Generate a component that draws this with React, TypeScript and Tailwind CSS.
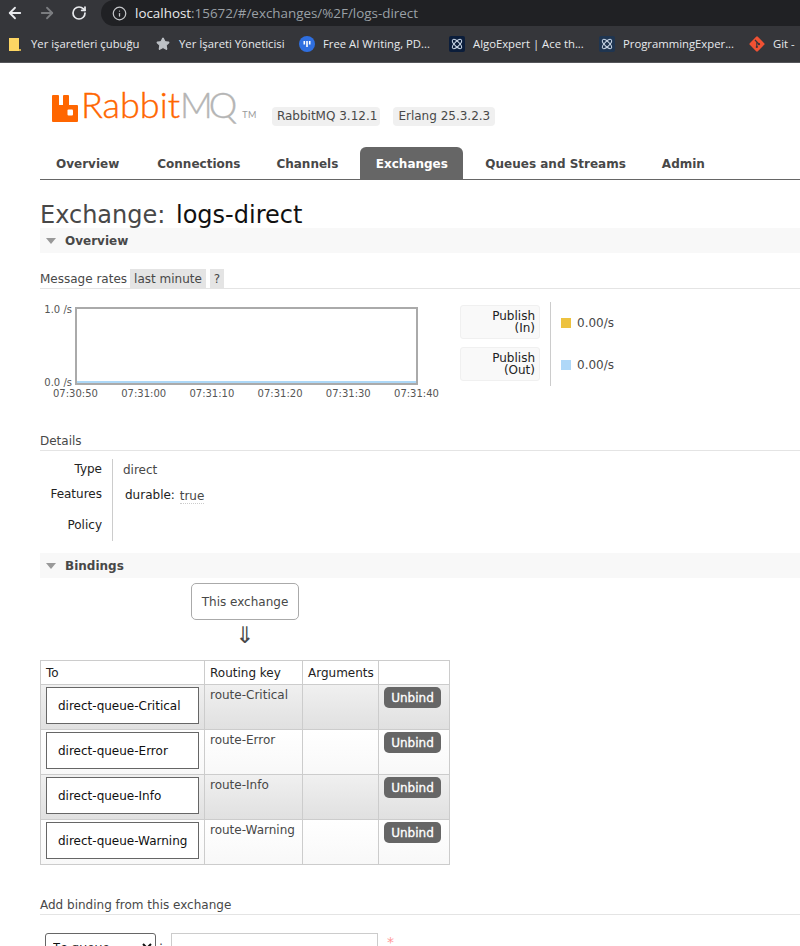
import React from 'react';
import { ArrowLeft, ArrowRight, RotateCw, Info, Star } from 'lucide-react';

const tabs = [
  { label: 'Overview', gap: 'mr-[6px]' },
  { label: 'Connections', gap: 'mr-[4px]' },
  { label: 'Channels', gap: 'mr-[6px]' },
  { label: 'Exchanges', gap: 'mr-[6px]' },
  { label: 'Queues and Streams', gap: 'mr-[4px]' },
  { label: 'Admin', gap: '' },
];
const times = ['07:30:50', '07:31:00', '07:31:10', '07:31:20', '07:31:30', '07:31:40'];
const bindings = [
  { queue: 'direct-queue-Critical', key: 'route-Critical' },
  { queue: 'direct-queue-Error', key: 'route-Error' },
  { queue: 'direct-queue-Info', key: 'route-Info' },
  { queue: 'direct-queue-Warning', key: 'route-Warning' },
];

function KnotIcon({ bg }: { bg: string }) {
  return (
    <svg width="16" height="16" viewBox="0 0 16 16" className="shrink-0">
      <rect width="16" height="16" rx="2" fill={bg} />
      <g fill="none" stroke="#c9d6e6" strokeWidth="1">
        <ellipse cx="8" cy="8" rx="6" ry="2.4" transform="rotate(45 8 8)" />
        <ellipse cx="8" cy="8" rx="6" ry="2.4" transform="rotate(-45 8 8)" />
      </g>
    </svg>
  );
}

function Bookmark({ icon, label, width }: { icon: React.ReactNode; label: string; width: string }) {
  return (
    <div className={`flex items-center gap-[8px] shrink-0 ${width}`}>
      {icon}
      <span className="text-[11.3px] text-[#e8eaed] whitespace-nowrap">{label}</span>
    </div>
  );
}

function BrowserChrome() {
  return (
    <div className="font-['Open_Sans',sans-serif]">
      <div className="h-[26px] bg-[#35363a] flex items-center pl-[6px] overflow-hidden">
        <ArrowLeft size={18} strokeWidth={2.4} className="text-[#e8eaed] shrink-0" />
        <ArrowRight size={18} strokeWidth={2.4} className="text-[#7b7d80] ml-[14px] shrink-0" />
        <RotateCw size={16} strokeWidth={2.6} className="text-[#e8eaed] ml-[15px] shrink-0" />
        <div className="ml-[14px] flex-1 h-[26px] rounded-l-[13px] bg-[#202124] flex items-center pl-[11px]">
          <Info size={15} className="text-[#c4c6c9]" />
          <span className="ml-[8px] text-[13.4px] text-[#e8eaed]">localhost</span>
          <span className="text-[13.4px] text-[#9aa0a6]">:15672/#/exchanges/%2F/logs-direct</span>
        </div>
      </div>
      <div className="h-[37px] bg-[#35363a] border-b border-[#55565a] flex items-center pl-[9px] overflow-hidden">
        <Bookmark
          width="w-[147px]"
          label="Yer işaretleri çubuğu"
          icon={
            <svg width="12" height="15" viewBox="0 0 12 15" className="mr-[2px]">
              <path d="M0 1h10v13H0z" fill="#fdd663" />
              <path d="M10 12h2v2h-2z" fill="#c9a94e" />
            </svg>
          }
        />
        <Bookmark
          width="w-[143px]"
          label="Yer İşareti Yöneticisi"
          icon={<Star size={14} fill="#bdc1c6" className="text-[#bdc1c6] mr-[1px]" />}
        />
        <Bookmark
          width="w-[150px]"
          label="Free AI Writing, PD..."
          icon={
            <svg width="16" height="16" viewBox="0 0 16 16">
              <circle cx="8" cy="8" r="8" fill="#2f6fe0" />
              <path d="M4.5 5h1.6v3.5H4.5zM7.2 5h1.6v6H7.2zM9.9 5h1.6v3.5H9.9z" fill="#fff" />
            </svg>
          }
        />
        <Bookmark width="w-[150px]" label="AlgoExpert | Ace th..." icon={<KnotIcon bg="#0b1d3a" />} />
        <Bookmark width="w-[150px]" label="ProgrammingExper..." icon={<KnotIcon bg="#1f3550" />} />
        <Bookmark
          width="w-[60px]"
          label="Git -"
          icon={
            <svg width="16" height="16" viewBox="0 0 16 16">
              <rect x="2.3" y="2.3" width="11.4" height="11.4" rx="1.2" transform="rotate(45 8 8)" fill="#f05133" />
              <path d="M6 4l4 4.2M7.8 6v5" stroke="#35363a" strokeWidth="1.2" />
              <circle cx="7.8" cy="11" r="1.1" fill="#35363a" />
              <circle cx="10" cy="8.2" r="1.1" fill="#35363a" />
            </svg>
          }
        />
      </div>
    </div>
  );
}

function Logo() {
  return (
    <div className="flex items-end h-[34px] font-['Lato',sans-serif]">
      <svg width="26" height="27" viewBox="0 0 26 27" className="shrink-0 mb-[3px] mr-[3px]">
        <path
          d="M1 0h5a1 1 0 0 1 1 1v9h4V1a1 1 0 0 1 1-1h4a1 1 0 0 1 1 1v9h8a1 1 0 0 1 1 1v15a1 1 0 0 1-1 1H1a1 1 0 0 1-1-1V1a1 1 0 0 1 1-1z"
          fill="#ff6600"
        />
        <rect x="15.500" y="14.500" width="5.500" height="6" rx="1" fill="#fff" />
      </svg>
      <span className="text-[36px] leading-[36px] mb-[3px] text-[#ff6600] font-light [-webkit-text-stroke:0.4px_#ff6600]">Rabbit</span>
      <span className="text-[36px] leading-[36px] mb-[3px] text-[#b5b5b5] font-light tracking-[-4px] [-webkit-text-stroke:0.4px_#b5b5b5]">MQ</span>
      <span className="text-[9px] leading-[20px] text-[#999] ml-[9px] tracking-[0.5px]">TM</span>
    </div>
  );
}

function SectionHeader({ title }: { title: string }) {
  return (
    <div className="h-[25px] bg-[#f8f8f8] flex items-center pl-[6px]">
      <span className="w-0 h-0 border-l-[5.5px] border-r-[5.5px] border-t-[6px] border-l-transparent border-r-transparent border-t-[#999]" />
      <span className="ml-[9px] text-[12px] font-bold text-[#484848]">{title}</span>
    </div>
  );
}

function RateChart() {
  return (
    <div className="flex">
      <div className="w-[35px] h-[85px] -mt-[3px] flex flex-col justify-between text-[10px] leading-[12px] text-[#555] text-right pr-[3px]">
        <span>1.0 /s</span>
        <span>0.0 /s</span>
      </div>
      <div>
        <div className="w-[343px] h-[78px] border-2 border-[#aaa] flex flex-col justify-end">
          <div className="h-[2px] bg-[#add8f7]" />
        </div>
        <div className="w-[386px] -ml-[22px] flex justify-between text-[10px] leading-[12px] text-[#555] mt-[3px]">
          {times.map((t) => (
            <span key={t}>{t}</span>
          ))}
        </div>
      </div>
    </div>
  );
}

function Legend() {
  return (
    <div className="flex ml-[21px] -mt-[2px]">
      <div className="w-[80px] flex flex-col gap-[8px]">
        {['(In)', '(Out)'].map((dir) => (
          <div
            key={dir}
            className="h-[34px] bg-[#f9f9f9] border border-[#f0f0f0] rounded-[3px] text-right pr-[4px] text-[12px] leading-[12px] text-[#222] pt-[4px]"
          >
            Publish
            <br />
            {dir}
          </div>
        ))}
      </div>
      <div className="ml-[10px] border-l border-[#ccc] h-[84px] -mt-[3px] pl-[10px] flex flex-col">
        <div className="flex items-center gap-[6px] h-[34px] mt-[4px] text-[12px] text-[#484848]">
          <span className="w-[10px] h-[10px] bg-[#edc240]" />
          0.00/s
        </div>
        <div className="flex items-center gap-[6px] h-[34px] mt-[8px] text-[12px] text-[#484848]">
          <span className="w-[10px] h-[10px] bg-[#afd8f8]" />
          0.00/s
        </div>
      </div>
    </div>
  );
}

function Details() {
  return (
    <div className="flex mt-[8px] text-[12px] text-[#222]">
      <div className="w-[73px] border-r border-[#ccc] h-[82px] text-right pr-[10px] flex flex-col">
        <span className="mt-[2px] leading-[16px]">Type</span>
        <span className="mt-[9px] leading-[16px]">Features</span>
        <span className="mt-[15px] leading-[16px]">Policy</span>
      </div>
      <div className="flex flex-col">
        <span className="ml-[10px] mt-[3px] leading-[16px] text-[#484848]">direct</span>
        <span className="ml-[12px] mt-[9px] leading-[16px]">
          durable:{' '}
          <span className="text-[#484848] relative top-[1px] ml-[1px] border-b border-dotted border-[#ccc]">true</span>
        </span>
      </div>
    </div>
  );
}

function BindingsTable() {
  return (
    <table className="w-[410px] table-fixed border-collapse border border-[#ccc] text-[12px]">
      <thead>
        <tr className="h-[24px] text-left text-[#222]">
          <th className="w-[164px] font-normal border border-[#ccc] pl-[5px]">To</th>
          <th className="w-[98px] font-normal border border-[#ccc] pl-[5px]">Routing key</th>
          <th className="w-[76px] font-normal border border-[#ccc] pl-[5px]">Arguments</th>
          <th className="font-normal border border-[#ccc]" />
        </tr>
      </thead>
      <tbody>
        {bindings.map((b, i) => {
          const bg = i % 2 === 0 ? 'bg-gradient-to-b from-[#f0f0f0] to-[#e0e0e0]' : 'bg-gradient-to-b from-white to-[#f8f8f8]';
          return (
            <tr key={b.queue} className={`h-[45px] ${bg}`}>
              <td className="border border-[#ccc] pl-[5px] align-top pt-[2px]">
                <div className="w-[153px] h-[37px] bg-white border border-[#666] flex items-center pl-[11px] text-[#111]">
                  {b.queue}
                </div>
              </td>
              <td className="border border-[#ccc] pl-[5px] align-top pt-[1px] text-[#484848]">{b.key}</td>
              <td className="border border-[#ccc]" />
              <td className="border border-[#ccc] pl-[5px] align-top pt-[2px]">
                <div className="w-[57px] h-[21px] rounded-[5px] bg-[#666] text-white text-[12px] [-webkit-text-stroke:0.3px_white] flex items-center justify-center">
                  Unbind
                </div>
              </td>
            </tr>
          );
        })}
      </tbody>
    </table>
  );
}

export default function App() {
  return (
    <div className="w-[800px] h-[946px] overflow-hidden bg-white">
      <BrowserChrome />
      <div className="pl-[40px] font-['DejaVu_Sans',sans-serif]">
        <div className="flex items-end pl-[12px] mt-[28px]">
          <Logo />
          <span className="ml-[15px] mb-[-1px] h-[19px] pl-[5px] pr-[3px] rounded-[4px] bg-[#f0f0f0] text-[12px] leading-[19px] text-[#484848]">RabbitMQ 3.12.1</span>
          <span className="ml-[13px] mb-[-1px] h-[19px] px-[5px] rounded-[4px] bg-[#f0f0f0] text-[12px] leading-[19px] text-[#484848]">Erlang 25.3.2.3</span>
        </div>

        <div className="flex border-b border-[#666] mt-[22px] h-[33px] items-end text-[12px] font-bold text-[#484848]">
          {tabs.map((t) => (
            <div
              key={t.label}
              className={
                t.label === 'Exchanges'
                  ? `h-[32px] w-[103px] justify-center pt-[1px] rounded-t-[6px] bg-[#666] text-white flex items-center ${t.gap}`
                  : `h-[32px] px-[16px] pt-[1px] flex items-center ${t.gap}`
              }
            >
              {t.label}
            </div>
          ))}
        </div>

        <h1 className="mt-[21px] h-[27px] text-[24px] leading-[28px] text-[#484848]">
          Exchange: <span className="text-[#111] ml-[3px]">logs-direct</span>
        </h1>
        <SectionHeader title="Overview" />

        <div className="mt-[16px] h-[20px] flex items-center border-b border-[#e4e4e4] text-[12px] text-[#484848]">
          Message rates
          <span className="ml-[3px] h-[19px] px-[4px] bg-[#e4e4e4] leading-[21px]">last minute</span>
          <span className="ml-[4px] h-[19px] px-[4px] bg-[#e4e4e4] leading-[21px]">?</span>
        </div>

        <div className="flex mt-[18px]">
          <RateChart />
          <Legend />
        </div>

        <div className="mt-[31px] h-[20px] flex items-center border-b border-[#e4e4e4] text-[12px] text-[#484848]">Details</div>
        <Details />

        <div className="mt-[12px]">
          <SectionHeader title="Bindings" />
        </div>

        <div className="ml-[151px] mt-[5px] w-[108px] h-[37px] border border-[#aaa] rounded-[5px] flex items-center justify-center text-[12px] text-[#484848]">
          This exchange
        </div>
        <div className="ml-[151px] w-[108px] h-[30px] text-center text-[23px] leading-[30px] text-[#484848]">⇓</div>

        <div className="mt-[10px]">
          <BindingsTable />
        </div>

        <div className="mt-[30px] h-[20px] flex items-center border-b border-[#e4e4e4] text-[12px] text-[#484848]">Add binding from this exchange</div>

        <div className="flex items-start mt-[18px] ml-[5px] text-[12px]">
          <select className="w-[111px] h-[27px] border border-[#666] rounded-[3px] bg-white text-[13px] text-[#111] pl-[3px] font-['Open_Sans',sans-serif]" defaultValue="To queue">
            <option>To queue</option>
          </select>
          <span className="ml-[3px] mt-[4px] text-[#484848]">:</span>
          <input className="ml-[8px] w-[207px] h-[27px] border border-[#ccc]" />
          <span className="ml-[9px] -mt-[1px] text-[#f99] text-[14px]">*</span>
        </div>
      </div>
    </div>
  );
}
